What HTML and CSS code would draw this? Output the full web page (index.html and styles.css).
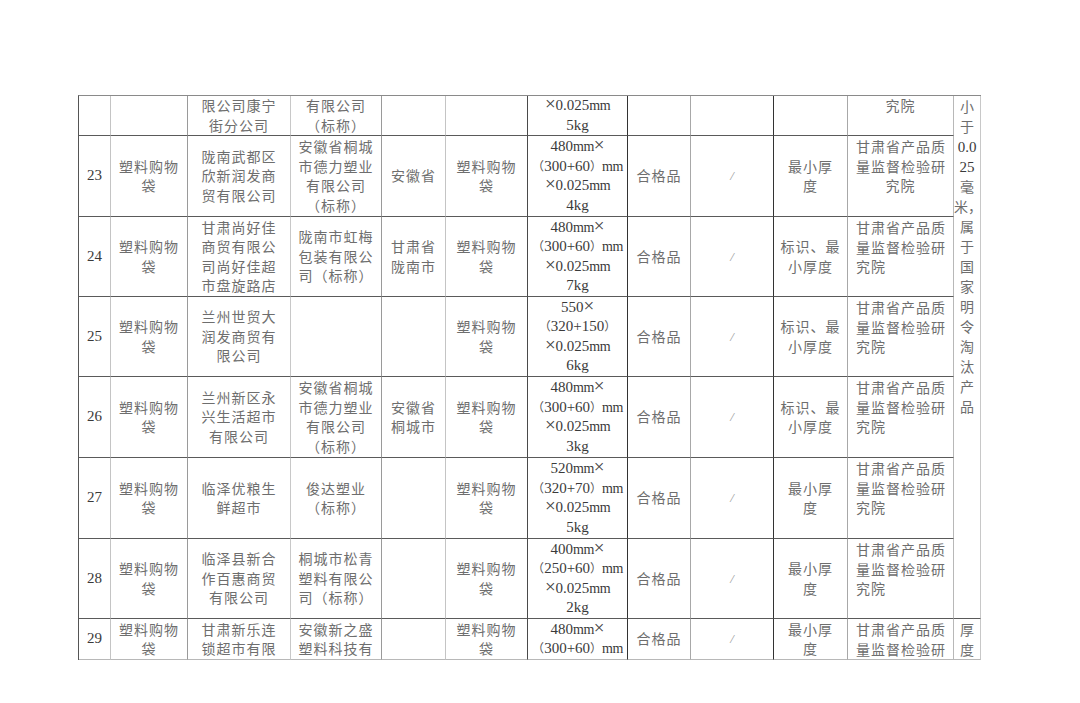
FILE: index.html
```html
<!DOCTYPE html>
<html lang="zh-CN">
<head>
<meta charset="utf-8">
<title>塑料购物袋抽检结果</title>
<link rel="stylesheet" href="styles.css">
</head>
<body>
<div class="page">
<table class="tbl">
<colgroup>
<col class="c1"><col class="c2"><col class="c3"><col class="c4"><col class="c5"><col class="c6"><col class="c7"><col class="c8"><col class="c9"><col class="c10"><col class="c11"><col class="c12">
</colgroup>
<tbody>
<tr class="h40">
<td class="num"></td>
<td></td>
<td>限公司康宁<br>街分公司</td>
<td>有限公司<br>（标称）</td>
<td></td>
<td></td>
<td class="spec"><span class="x">×</span>0.025<span class="u">mm</span><br>5kg</td>
<td></td>
<td></td>
<td></td>
<td class="inst ctr top0">究院</td>
<td class="note" rowspan="7">小<br>于<br><span class="d">0.0</span><br><span class="d">25</span><br>毫<br>米，<br>属<br>于<br>国<br>家<br>明<br>令<br>淘<br>汰<br>产<br>品</td>
</tr>
<tr class="h81">
<td class="num">23</td>
<td>塑料购物<br>袋</td>
<td>陇南武都区<br>欣新润发商<br>贸有限公司</td>
<td>安徽省桐城<br>市德力塑业<br>有限公司<br>（标称）</td>
<td>安徽省</td>
<td>塑料购物<br>袋</td>
<td class="spec">480<span class="u">mm</span><span class="x">×</span><br><span class="p">（</span>300+60<span class="p">）</span><span class="u">mm</span><br><span class="x">×</span>0.025<span class="u">mm</span><br>4kg</td>
<td>合格品</td>
<td class="sl">/</td>
<td>最小厚<br>度</td>
<td class="inst ctr">甘肃省产品质<br>量监督检验研<br>究院</td>
</tr>
<tr class="h80">
<td class="num">24</td>
<td>塑料购物<br>袋</td>
<td>甘肃尚好佳<br>商贸有限公<br>司尚好佳超<br>市盘旋路店</td>
<td>陇南市虹梅<br>包装有限公<br>司（标称）</td>
<td>甘肃省<br>陇南市</td>
<td>塑料购物<br>袋</td>
<td class="spec">480<span class="u">mm</span><span class="x">×</span><br><span class="p">（</span>300+60<span class="p">）</span><span class="u">mm</span><br><span class="x">×</span>0.025<span class="u">mm</span><br>7kg</td>
<td>合格品</td>
<td class="sl">/</td>
<td>标识、最<br>小厚度</td>
<td class="inst">甘肃省产品质<br>量监督检验研<br>究院</td>
</tr>
<tr class="h80">
<td class="num">25</td>
<td>塑料购物<br>袋</td>
<td>兰州世贸大<br>润发商贸有<br>限公司</td>
<td></td>
<td></td>
<td>塑料购物<br>袋</td>
<td class="spec">550<span class="x">×</span><br><span class="p">（</span>320+150<span class="p">）</span><br><span class="x">×</span>0.025<span class="u">mm</span><br>6kg</td>
<td>合格品</td>
<td class="sl">/</td>
<td>标识、最<br>小厚度</td>
<td class="inst">甘肃省产品质<br>量监督检验研<br>究院</td>
</tr>
<tr class="h81">
<td class="num">26</td>
<td>塑料购物<br>袋</td>
<td>兰州新区永<br>兴生活超市<br>有限公司</td>
<td>安徽省桐城<br>市德力塑业<br>有限公司<br>（标称）</td>
<td>安徽省<br>桐城市</td>
<td>塑料购物<br>袋</td>
<td class="spec">480<span class="u">mm</span><span class="x">×</span><br><span class="p">（</span>300+60<span class="p">）</span><span class="u">mm</span><br><span class="x">×</span>0.025<span class="u">mm</span><br>3kg</td>
<td>合格品</td>
<td class="sl">/</td>
<td>标识、最<br>小厚度</td>
<td class="inst">甘肃省产品质<br>量监督检验研<br>究院</td>
</tr>
<tr class="h81">
<td class="num">27</td>
<td>塑料购物<br>袋</td>
<td>临泽优粮生<br>鲜超市</td>
<td>俊达塑业<br>（标称）</td>
<td></td>
<td>塑料购物<br>袋</td>
<td class="spec">520<span class="u">mm</span><span class="x">×</span><br><span class="p">（</span>320+70<span class="p">）</span><span class="u">mm</span><br><span class="x">×</span>0.025<span class="u">mm</span><br>5kg</td>
<td>合格品</td>
<td class="sl">/</td>
<td>最小厚<br>度</td>
<td class="inst">甘肃省产品质<br>量监督检验研<br>究院</td>
</tr>
<tr class="h80">
<td class="num">28</td>
<td>塑料购物<br>袋</td>
<td>临泽县新合<br>作百惠商贸<br>有限公司</td>
<td>桐城市松青<br>塑料有限公<br>司（标称）</td>
<td></td>
<td>塑料购物<br>袋</td>
<td class="spec">400<span class="u">mm</span><span class="x">×</span><br><span class="p">（</span>250+60<span class="p">）</span><span class="u">mm</span><br><span class="x">×</span>0.025<span class="u">mm</span><br>2kg</td>
<td>合格品</td>
<td class="sl">/</td>
<td>最小厚<br>度</td>
<td class="inst">甘肃省产品质<br>量监督检验研<br>究院</td>
</tr>
<tr class="h40 last">
<td class="num">29</td>
<td>塑料购物<br>袋</td>
<td>甘肃新乐连<br>锁超市有限</td>
<td>安徽新之盛<br>塑料科技有</td>
<td></td>
<td>塑料购物<br>袋</td>
<td class="spec">480<span class="u">mm</span><span class="x">×</span><br><span class="p">（</span>300+60<span class="p">）</span><span class="u">mm</span></td>
<td>合格品</td>
<td class="sl">/</td>
<td>最小厚<br>度</td>
<td class="inst">甘肃省产品质<br>量监督检验研</td>
<td class="note">厚<br>度</td>
</tr>
</tbody>
</table>
</div>
</body>
</html>
```

FILE: styles.css
```css
html, body {
  margin: 0;
  padding: 0;
  background: #ffffff;
}

.page {
  width: 1080px;
  height: 703px;
  box-sizing: border-box;
  padding: 95px 0 0 78px;
  overflow: hidden;
}

.tbl {
  table-layout: fixed;
  width: 903px;
  border-collapse: separate;
  border-spacing: 0;
  border-top: 1px solid #8a8a8a;
  border-left: 1px solid #555555;
  font-family: "Noto Sans CJK SC", "Liberation Serif", serif;
  font-size: 14px;
  line-height: 19.5px;
  letter-spacing: 1px;
  color: #6e6e6e;
}

.c1 { width: 32px; }
.c2 { width: 77px; }
.c3 { width: 103px; }
.c4 { width: 91px; }
.c5 { width: 64px; }
.c6 { width: 82px; }
.c7 { width: 100px; }
.c8 { width: 63px; }
.c9 { width: 83px; }
.c10 { width: 74px; }
.c11 { width: 106px; }
.c12 { width: 27px; }

.tbl td {
  box-sizing: border-box;
  padding: 0;
  text-align: center;
  vertical-align: middle;
  white-space: nowrap;
  border-right: 1px solid #999999;
  border-bottom: 1px solid #5a5a5a;
}

.tbl tr.last td {
  border-bottom-color: #b8b8b8;
}

.tbl td:nth-child(1) { border-right-color: #c4c4c4; }
.tbl td:nth-child(2) { border-right-color: #9a9a9a; }
.tbl td:nth-child(3) { border-right-color: #c8c8c8; }
.tbl td:nth-child(4) { border-right-color: #9a9a9a; }
.tbl td:nth-child(5) { border-right-color: #c4c4c4; }
.tbl td:nth-child(6) { border-right-color: #4a4a4a; }
.tbl td:nth-child(7) { border-right-color: #333333; }
.tbl td:nth-child(8) { border-right-color: #a8a8a8; }
.tbl td:nth-child(9) { border-right-color: #333333; }
.tbl td:nth-child(10) { border-right-color: #a8a8a8; }
.tbl td:nth-child(11) { border-right-color: #b8b8b8; }
.tbl td:nth-child(12) { border-right-color: #c8c8c8; }
.tbl td.note { border-right-color: #c8c8c8; }

.h40 { height: 40px; }
.h80 { height: 80px; }
.h81 { height: 81px; }

.num {
  font-family: "Liberation Serif", serif;
  font-size: 15px;
  letter-spacing: 0;
  color: #3a3a3a;
}

.spec {
  font-family: "Liberation Serif", "Noto Sans CJK SC", serif;
  font-size: 15px;
  letter-spacing: 0;
  color: #3a3a3a;
}

.spec span {
  line-height: 10px;
}

.spec .u {
  font-size: 14px;
  letter-spacing: -0.5px;
}

.spec .x {
  font-size: 19px;
  color: #444444;
}

.spec .p {
  font-family: "Noto Sans CJK SC", sans-serif;
  font-size: 12px;
  color: #555555;
}

.sl {
  font-family: "Liberation Serif", serif;
  font-style: italic;
  font-size: 13px;
  letter-spacing: 0;
  color: #9a9a9a;
}

.tbl td.inst {
  vertical-align: top;
  text-align: left;
  padding: 1px 8px 0 8px;
}

.tbl td.inst.ctr {
  text-align: center;
}

.tbl td.inst.top0 {
  padding-top: 0;
}

.tbl td.note {
  vertical-align: top;
  padding-top: 0;
  letter-spacing: 0;
  line-height: 20px;
}

.note .d {
  font-family: "Liberation Serif", serif;
  font-size: 15px;
  line-height: 10px;
  color: #3a3a3a;
}
```
